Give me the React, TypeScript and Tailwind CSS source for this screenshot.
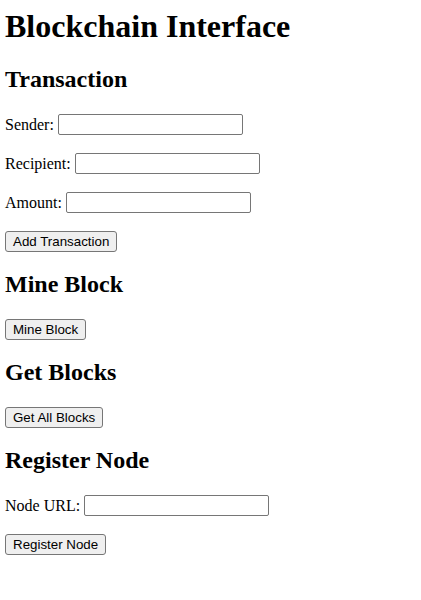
import React from "react";

function Field({ label }: { label: string }) {
  return (
    <p className="my-4 flex h-[23px] items-center">
      <span>{label}</span>
      <input
        type="text"
        className="ml-[4px] h-[21px] w-[185px] rounded-[2px] border border-[#767676] bg-white px-[2px] font-['Liberation_Sans',sans-serif] text-[13.33px] outline-none"
      />
    </p>
  );
}

function Btn({ children }: { children: React.ReactNode }) {
  return (
    <p className="my-4 flex h-[20.5px] items-start">
      <button className="mt-[0.5px] h-[21px] shrink-0 rounded-[3px] border border-[#767676] bg-[#efefef] px-[7px] font-['Liberation_Sans',sans-serif] text-[13.33px] leading-[15px] text-black">
        {children}
      </button>
    </p>
  );
}

function H2({ children }: { children: React.ReactNode }) {
  return <h2 className="my-[19.92px] text-[24px] font-bold leading-[27.6px]">{children}</h2>;
}

export default function App() {
  return (
    <div className="min-h-[600px] bg-white px-[5px] pt-[7.5px] font-['Liberation_Serif',serif] text-[16px] text-black">
      <h1 className="mb-[21.44px] text-[32px] font-bold leading-[37px]">Blockchain Interface</h1>
      <H2>Transaction</H2>
      <Field label="Sender:" />
      <Field label="Recipient:" />
      <Field label="Amount:" />
      <Btn>Add Transaction</Btn>
      <H2>Mine Block</H2>
      <Btn>Mine Block</Btn>
      <H2>Get Blocks</H2>
      <Btn>Get All Blocks</Btn>
      <H2>Register Node</H2>
      <Field label="Node URL:" />
      <Btn>Register Node</Btn>
    </div>
  );
}
